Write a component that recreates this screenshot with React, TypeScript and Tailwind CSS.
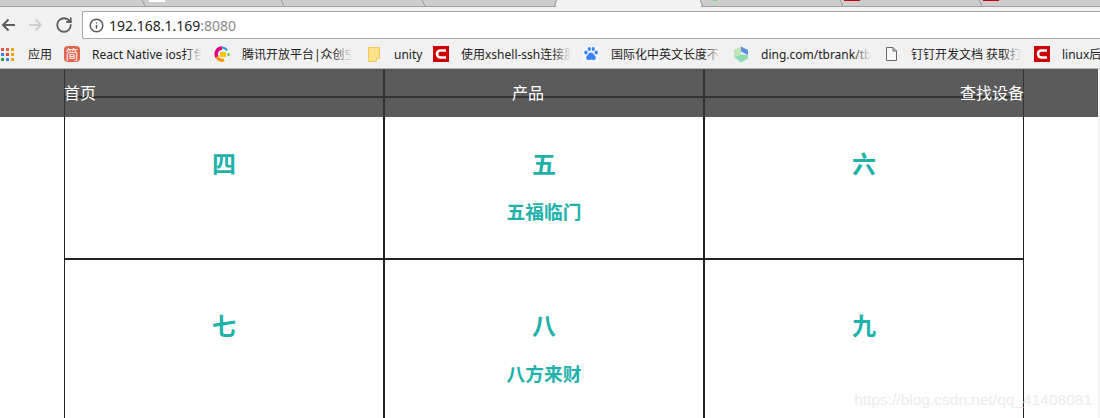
import React from 'react';
import { RotateCw, Info } from 'lucide-react';

const CJK = "font-['Noto_Sans','Noto_Sans_CJK_SC',sans-serif]";

const AppsIcon = () => {
  const colors = ['#d9534f', '#e8633a', '#f0a30a', '#3f83f0', '#e2453c', '#f0a30a', '#2f9e44', '#3f83f0', '#f0a30a'];
  return (
    <div className="grid grid-cols-3 gap-[2px] w-[13px]">
      {colors.map((c, i) => (
        <div key={i} className="w-[3px] h-[3px]" style={{ background: c }} />
      ))}
    </div>
  );
};

const RedC = () => (
  <div className="w-[16px] h-[16px] bg-[#cc0000] flex items-center justify-center">
    <svg width="12" height="10" viewBox="0 0 12 10">
      <path d="M11 1.500H5.500a3.500 3.500 0 0 0 0 7H11" fill="none" stroke="#fff" strokeWidth="2.600" />
    </svg>
  </div>
);

const JianIcon = () => (
  <div className="w-[16px] h-[16px] rounded-sm bg-[#e4644f] text-white text-[13px] leading-[16px] text-center">简</div>
);

const QqIcon = () => (
  <svg width="16" height="16" viewBox="0 0 16 16">
    <path d="M8 2a6 6 0 0 0-5 9" fill="none" stroke="#e6007e" strokeWidth="3.500" />
    <path d="M3 11a6 6 0 0 0 7 3" fill="none" stroke="#f39200" strokeWidth="3" />
    <path d="M8 1.500a6 6 0 0 1 5 3" fill="none" stroke="#1d9bf0" strokeWidth="2" />
    <path d="M14.500 7v3" fill="none" stroke="#6cc24a" strokeWidth="2" />
    <rect x="6" y="6" width="6" height="5" fill="#f6c700" />
  </svg>
);

const FolderIcon = () => (
  <svg width="12" height="15" viewBox="0 0 12 15">
    <path d="M.5.500h11v11h-3v3H.5z" fill="#fde28a" stroke="#f0c75a" />
  </svg>
);

const BaiduIcon = () => (
  <svg width="16" height="16" viewBox="0 0 16 16">
    <rect width="16" height="16" fill="#f4f8fe" />
    <g fill="#3b82f6">
      <ellipse cx="3" cy="6.500" rx="1.700" ry="2.100" />
      <ellipse cx="6.300" cy="3" rx="1.600" ry="2.100" />
      <ellipse cx="10.200" cy="3" rx="1.600" ry="2.100" />
      <ellipse cx="13.200" cy="6.500" rx="1.700" ry="2.100" />
      <path d="M8 6.500c-2 0-2.800 2.200-4.300 3.700-1.300 1.600 0 4.300 2.200 3.800 1.200-.2 3-.2 4.200 0 2.200.5 3.500-2.200 2.200-3.800C10.800 8.700 10 6.500 8 6.500z" />
    </g>
  </svg>
);

const DingIcon = () => (
  <svg width="17" height="17" viewBox="0 0 16 16">
    <path d="M8 0l7 3.500v5L8 5z" fill="#5b8fd9" />
    <path d="M8 0L1 3.500v7L8 8z" fill="#bfe6b8" />
    <path d="M1 10.500L8 16l7-4V8.500L8 8z" fill="#8fdcae" />
  </svg>
);

const FileIcon = () => (
  <svg width="11" height="14" viewBox="0 0 11 14">
    <path d="M.5.500h6.500l3.500 3.500v9.500H.5z M7 .500v3.500h3.500" fill="#f8f8f8" stroke="#666" />
  </svg>
);

const bookmarks = [
  { icon: <JianIcon />, label: 'React Native ios打包', width: 'w-[150px]', fade: true },
  { icon: <QqIcon />, label: '腾讯开放平台|众创空间', width: 'w-[152px]', fade: true },
  { icon: <FolderIcon />, label: 'unity', width: 'w-[67px]', fade: false },
  { icon: <RedC />, label: '使用xshell-ssh连接服务器', width: 'w-[150px]', fade: true },
  { icon: <BaiduIcon />, label: '国际化中英文长度不一', width: 'w-[150px]', fade: true },
  { icon: <DingIcon />, label: 'ding.com/tbrank/tbrank', width: 'w-[150px]', fade: true },
  { icon: <FileIcon />, label: '钉钉开发文档 获取打卡', width: 'w-[151px]', fade: true },
  { icon: <RedC />, label: 'linux后台运行', width: 'w-[100px]', fade: false },
];

const tabEdges = [
  'left-[143px] skew-x-[25deg]',
  'left-[282px] skew-x-[25deg]',
  'left-[423px] skew-x-[25deg]',
  'left-[555px] -skew-x-[25deg]',
  'left-[701px] skew-x-[25deg]',
  'left-[841px] skew-x-[25deg]',
  'left-[980px] skew-x-[25deg]',
];

const tabBits = [
  'left-[149px] w-[16px] h-[2px] bg-white',
  'left-[713px] w-[4px] h-px bg-[#6fdc8c]',
  'left-[844px] w-[16px] h-px bg-[#cc0000]',
  'left-[983px] w-[16px] h-px bg-[#cc0000]',
];

const cells = [
  { title: '四' },
  { title: '五', sub: '五福临门' },
  { title: '六' },
  { title: '七' },
  { title: '八', sub: '八方来财' },
  { title: '九' },
];

export default function App() {
  return (
    <div className={`relative w-[1100px] h-[418px] overflow-hidden bg-white ${CJK}`}>
      {/* tab strip */}
      <div className="relative h-[7px] bg-[#cdcdcd] border-b border-[#a0a0a0]">
        <div className="absolute left-[556px] top-0 w-[145px] h-[7px] bg-[#f2f2f2]" />
        {tabBits.map((bit) => (
          <div key={bit} className={`absolute top-0 ${bit}`} />
        ))}
        {tabEdges.map((edge) => (
          <div key={edge} className={`absolute top-0 h-[6px] w-px bg-[#999] ${edge}`} />
        ))}
      </div>

      {/* toolbar */}
      <div className="flex items-start h-[32px] pt-[4px] bg-[#f2f2f2]">
        <div className="flex items-center w-[82px] h-[28px] shrink-0 pl-[1px]">
          <svg width="14" height="14" viewBox="0 0 14 14" fill="none" stroke="#5f5f5f" strokeWidth="2">
            <path d="M14 7H2M7.500 1.500L2 7l5.500 5.500" />
          </svg>
          <svg width="14" height="14" viewBox="0 0 14 14" fill="none" stroke="#cfcfcf" strokeWidth="2" className="ml-[14px]">
            <path d="M0 7h12M6.500 1.500L12 7l-5.500 5.500" />
          </svg>
          <RotateCw size={18} strokeWidth={2.4} className="text-[#5f5f5f] ml-[12px]" />
        </div>
        <div className="flex items-center flex-1 h-[28px] bg-white border border-[#a9a9a9] border-r-0 rounded-l-[2px] pl-[6px]">
          <Info size={15} strokeWidth={2.4} className="text-[#5a5a5a]" />
          <span className="ml-[5px] text-[14px] text-[#222]">192.168.1.169</span>
          <span className="text-[14px] text-[#888]">:8080</span>
        </div>
      </div>

      {/* bookmarks */}
      <div className="flex items-center h-[30px] pt-px bg-[#f1f1f1] border-b border-[#b8b8b8] text-[12px] text-[#222] whitespace-nowrap">
        <div className="w-[64px] shrink-0 flex items-center pl-[1px]">
          <AppsIcon />
          <span className="ml-[14px] pt-px">应用</span>
        </div>
        {bookmarks.map((b) => (
          <div key={b.label} className={`${b.width} shrink-0 flex items-center`}>
            <div className="w-[16px] shrink-0 flex justify-center">{b.icon}</div>
            <div className="relative ml-[12px] w-[110px] pt-px overflow-hidden">
              {b.label}
              {b.fade && (
                <div className="absolute right-0 top-0 h-full w-[18px] bg-gradient-to-r from-transparent to-[#f1f1f1]" />
              )}
            </div>
          </div>
        ))}
      </div>

      {/* page */}
      <div className="relative">
        <div className="ml-[64px] w-[960px] grid grid-cols-3">
          {[0, 1, 2].map((i) => (
            <div key={i} className="h-[29px] border-x border-b-2 border-[#222]" />
          ))}
          {cells.map((c) => (
            <div key={c.title} className="h-[162px] border-x border-b-2 border-[#222] text-center text-[#20b2aa] font-bold">
              <div className="mt-[50px] text-[24px] leading-[32px]">{c.title}</div>
              {c.sub && <div className="mt-[16px] text-[18.72px] leading-[32px]">{c.sub}</div>}
            </div>
          ))}
        </div>

        {/* translucent nav bar over the table */}
        <div className="absolute left-0 top-0 w-[1098px] h-[48px] bg-[#373737]/[.82]">
          <div className="ml-[64px] w-[960px] flex justify-between pt-[13px] text-[16px] leading-[22px] text-white">
            <span>首页</span>
            <span>产品</span>
            <span>查找设备</span>
          </div>
        </div>

        <div className="absolute right-0 top-0 h-[349px] w-[2px] bg-[#f4f4f4]" />
      </div>

      {/* watermark */}
      <div className="absolute right-[8px] bottom-[8px] text-[15.5px] leading-[20px] text-[#ececec] font-['Liberation_Sans',sans-serif]">
        https://blog.csdn.net/qq_41408081
      </div>
    </div>
  );
}
